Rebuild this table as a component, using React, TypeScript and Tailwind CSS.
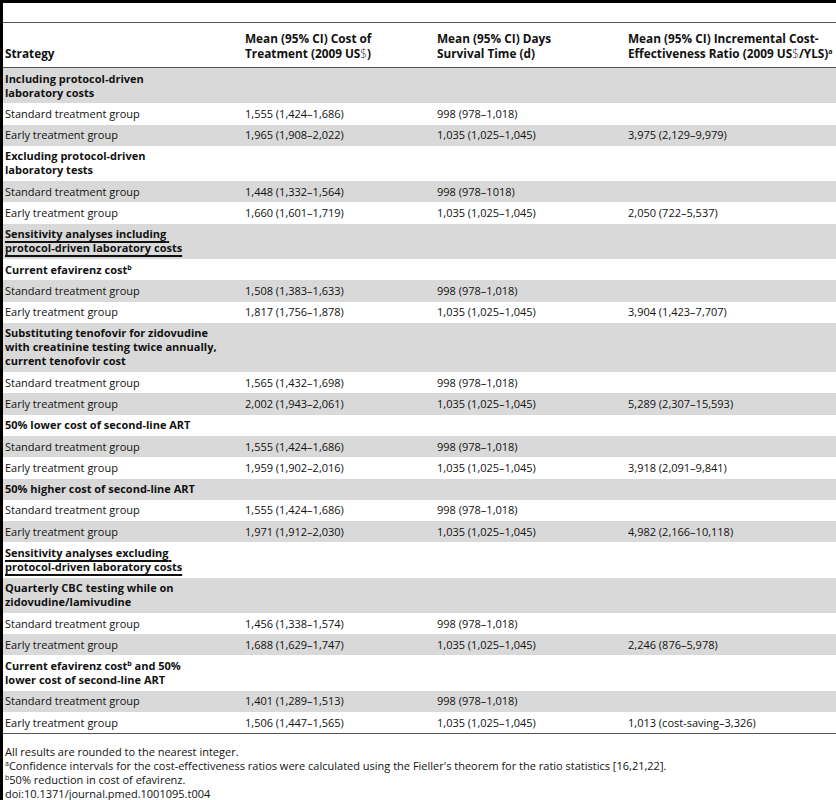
type Row = {
  label: React.ReactNode;
  cost?: string;
  days?: string;
  icer?: string;
  head?: boolean;
};

const Sup = ({ children }: { children: React.ReactNode }) => (
  <sup className="text-[7px] font-bold relative -top-[4px]">{children}</sup>
);

const Dollar = () => <span className="font-light text-[#444]">$</span>;

const rows: Row[] = [
  {
    head: true,
    label: (
      <>
        Including protocol-driven
        <br />
        laboratory costs
      </>
    ),
  },
  { label: "Standard treatment group", cost: "1,555 (1,424–1,686)", days: "998 (978–1,018)" },
  { label: "Early treatment group", cost: "1,965 (1,908–2,022)", days: "1,035 (1,025–1,045)", icer: "3,975 (2,129–9,979)" },
  {
    head: true,
    label: (
      <>
        Excluding protocol-driven
        <br />
        laboratory tests
      </>
    ),
  },
  { label: "Standard treatment group", cost: "1,448 (1,332–1,564)", days: "998 (978–1018)" },
  { label: "Early treatment group", cost: "1,660 (1,601–1,719)", days: "1,035 (1,025–1,045)", icer: "2,050 (722–5,537)" },
  {
    head: true,
    label: (
      <span className="underline decoration-[1.5px] underline-offset-[3px]">
        Sensitivity analyses including{"\u00a0"}
        <br />
        protocol-driven laboratory costs
      </span>
    ),
  },
  {
    head: true,
    label: (
      <>
        Current efavirenz cost<Sup>b</Sup>
      </>
    ),
  },
  { label: "Standard treatment group", cost: "1,508 (1,383–1,633)", days: "998 (978–1,018)" },
  { label: "Early treatment group", cost: "1,817 (1,756–1,878)", days: "1,035 (1,025–1,045)", icer: "3,904 (1,423–7,707)" },
  {
    head: true,
    label: (
      <>
        Substituting tenofovir for zidovudine
        <br />
        with creatinine testing twice annually,
        <br />
        current tenofovir cost
      </>
    ),
  },
  { label: "Standard treatment group", cost: "1,565 (1,432–1,698)", days: "998 (978–1,018)" },
  { label: "Early treatment group", cost: "2,002 (1,943–2,061)", days: "1,035 (1,025–1,045)", icer: "5,289 (2,307–15,593)" },
  { head: true, label: "50% lower cost of second-line ART" },
  { label: "Standard treatment group", cost: "1,555 (1,424–1,686)", days: "998 (978–1,018)" },
  { label: "Early treatment group", cost: "1,959 (1,902–2,016)", days: "1,035 (1,025–1,045)", icer: "3,918 (2,091–9,841)" },
  { head: true, label: "50% higher cost of second-line ART" },
  { label: "Standard treatment group", cost: "1,555 (1,424–1,686)", days: "998 (978–1,018)" },
  { label: "Early treatment group", cost: "1,971 (1,912–2,030)", days: "1,035 (1,025–1,045)", icer: "4,982 (2,166–10,118)" },
  {
    head: true,
    label: (
      <span className="underline decoration-[1.5px] underline-offset-[3px]">
        Sensitivity analyses excluding{"\u00a0"}
        <br />
        protocol-driven laboratory costs
      </span>
    ),
  },
  {
    head: true,
    label: (
      <>
        Quarterly CBC testing while on
        <br />
        zidovudine/lamivudine
      </>
    ),
  },
  { label: "Standard treatment group", cost: "1,456 (1,338–1,574)", days: "998 (978–1,018)" },
  { label: "Early treatment group", cost: "1,688 (1,629–1,747)", days: "1,035 (1,025–1,045)", icer: "2,246 (876–5,978)" },
  {
    head: true,
    label: (
      <>
        Current efavirenz cost<Sup>b</Sup> and 50%
        <br />
        lower cost of second-line ART
      </>
    ),
  },
  { label: "Standard treatment group", cost: "1,401 (1,289–1,513)", days: "998 (978–1,018)" },
  { label: "Early treatment group", cost: "1,506 (1,447–1,565)", days: "1,035 (1,025–1,045)", icer: "1,013 (cost-saving–3,326)" },
];

const cols = "grid grid-cols-[240px_192px_191px_1fr]";

export default function App() {
  return (
    <div
      className="w-[836px] h-[800px] bg-white text-[#111] text-[11px] overflow-hidden"
      style={{ fontFamily: '"Open Sans", "Noto Sans", sans-serif' }}
    >
      <div className="h-[3px] bg-black" />
      <div className="flex h-[797px]">
        <div className="w-[3px] bg-black" />
        <div className="flex-1 pt-[19px]">
          {/* header */}
          <div className={`${cols} font-bold text-[11.8px] border-t border-b border-[#555] leading-[15px]`}>
            <div className="pl-[2px] pt-[7.5px] pb-[6.5px] self-end">Strategy</div>
            <div className="pl-[2px] pt-[7.5px] pb-[6.5px]">
              Mean (95% CI) Cost of
              <br />
              Treatment (2009 US<Dollar />)
            </div>
            <div className="pl-[2px] pt-[7.5px] pb-[6.5px]">
              Mean (95% CI) Days
              <br />
              Survival Time (d)
            </div>
            <div className="pl-[2px] pt-[7.5px] pb-[6.5px]">
              Mean (95% CI) Incremental Cost-
              <br />
              Effectiveness Ratio (2009 US<Dollar />/YLS)<Sup>a</Sup>
            </div>
          </div>

          {/* body */}
          <div className="border-b border-[#555]">
            {rows.map((r, i) => (
              <div
                key={i}
                className={`${cols} leading-[14px] ${i % 2 === 0 ? "bg-[#d9d9d9]" : "bg-white"}`}
              >
                <div className={`pl-[2px] py-[3.65px] ${r.head ? "font-bold" : ""}`}>{r.label}</div>
                <div className="pl-[2px] py-[3.65px]">{r.cost}</div>
                <div className="pl-[2px] py-[3.65px]">{r.days}</div>
                <div className="pl-[2px] py-[3.65px]">{r.icer}</div>
              </div>
            ))}
          </div>

          {/* footnotes */}
          <div className="pl-[2px] pt-[11px] leading-[14px]">
            <p>All results are rounded to the nearest integer.</p>
            <p>
              <sup className="text-[7px] relative -top-[4px]">a</sup>Confidence intervals for the cost-effectiveness
              ratios were calculated using the Fieller's theorem for the ratio statistics [16,21,22].
            </p>
            <p>
              <sup className="text-[7px] relative -top-[4px]">b</sup>50% reduction in cost of efavirenz.
            </p>
            <p>doi:10.1371/journal.pmed.1001095.t004</p>
          </div>
        </div>
      </div>
    </div>
  );
}
